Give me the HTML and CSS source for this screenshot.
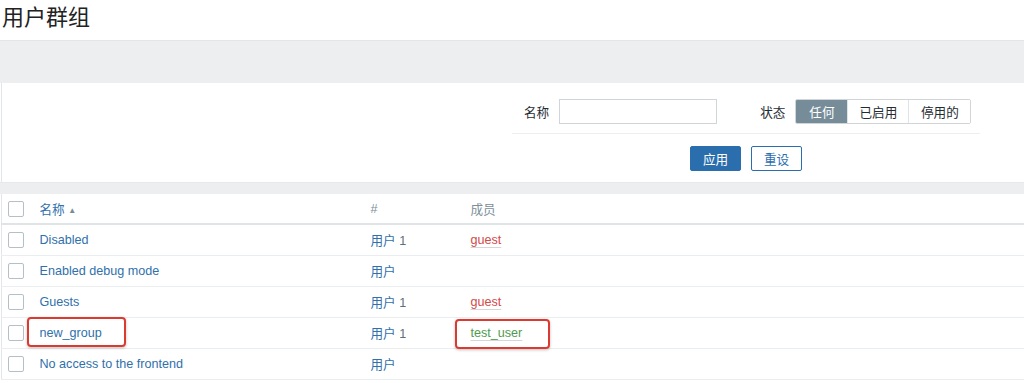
FILE: index.html
```html
<!DOCTYPE html>
<html lang="zh">
<head>
<meta charset="utf-8">
<title>用户群组</title>
<link rel="stylesheet" href="styles.css">
</head>
<body>
<header class="page-header">
  <h1 class="title">用户群组</h1>
</header>
<div class="band"></div>
<section class="filter">
  <div class="filter-inner">
    <div class="filter-row">
      <label class="flabel">名称</label>
      <input class="finput" type="text">
      <label class="flabel status-label">状态</label>
      <div class="seg">
        <span class="seg-item active">任何</span>
        <span class="seg-item w61">已启用</span>
        <span class="seg-item w63">停用的</span>
      </div>
    </div>
    <div class="filter-buttons">
      <button class="btn primary">应用</button>
      <button class="btn alt">重设</button>
    </div>
  </div>
</section>
<div class="band small"></div>
<table class="list">
  <thead>
    <tr>
      <th class="c-check"><span class="cb"></span></th>
      <th class="c-name"><span class="link">名称</span> <span class="arrow">▲</span></th>
      <th class="c-num">#</th>
      <th class="c-mem">成员</th>
    </tr>
  </thead>
  <tbody>
    <tr>
      <td class="c-check"><span class="cb"></span></td>
      <td class="c-name"><span class="link">Disabled</span></td>
      <td class="c-num"><span class="link">用户</span> <span class="cnt">1</span></td>
      <td class="c-mem"><span class="member red">guest</span></td>
    </tr>
    <tr>
      <td class="c-check"><span class="cb"></span></td>
      <td class="c-name"><span class="link">Enabled debug mode</span></td>
      <td class="c-num"><span class="link">用户</span></td>
      <td class="c-mem"></td>
    </tr>
    <tr>
      <td class="c-check"><span class="cb"></span></td>
      <td class="c-name"><span class="link">Guests</span></td>
      <td class="c-num"><span class="link">用户</span> <span class="cnt">1</span></td>
      <td class="c-mem"><span class="member red">guest</span></td>
    </tr>
    <tr>
      <td class="c-check"><span class="cb"></span></td>
      <td class="c-name"><span class="link mark mark-a">new_group</span></td>
      <td class="c-num"><span class="link">用户</span> <span class="cnt">1</span></td>
      <td class="c-mem"><span class="member green mark mark-b">test_user</span></td>
    </tr>
    <tr>
      <td class="c-check"><span class="cb"></span></td>
      <td class="c-name"><span class="link">No access to the frontend</span></td>
      <td class="c-num"><span class="link">用户</span></td>
      <td class="c-mem"></td>
    </tr>
  </tbody>
</table>
</body>
</html>
```
FILE: styles.css
```css
* { box-sizing: border-box; }
html, body { margin: 0; padding: 0; background: #ffffff; }
body {
  font-family: "Liberation Sans", Arial, "Noto Sans CJK SC", sans-serif;
  font-size: 12.6px;
  color: #1f2c33;
  overflow: hidden;
}
.page-header { height: 40px; padding: 4px 0 0 2px; }
.title {
  margin: 0;
  font-family: "Liberation Sans", "Noto Sans CJK SC", sans-serif;
  font-size: 22px;
  font-weight: normal;
  line-height: 27px;
  color: #222222;
}
.band {
  height: 43px;
  background: #eceef0;
  border-top: 1px solid #e3e5e7;
}
.band.small { height: 12px; border-top: 1px solid #e6e8ea; }
.filter {
  height: 99px;
  background: #fff;
  margin-left: 1px;
  border-left: 1px solid #e3e6e8;
  display: flex;
  justify-content: flex-end;
  padding: 16px 44px 0 0;
}
.filter-inner { width: 468px; display: flex; flex-direction: column; }
.filter-row {
  display: flex;
  align-items: center;
  height: 25px;
  padding-left: 12px;
  margin-bottom: 9px;
}
.filter-inner .filter-buttons {
  border-top: 1px solid #eceff1;
  padding-top: 12px;
  display: flex;
  justify-content: center;
  gap: 10px;
}
.flabel { color: #1f2c33; font-size: 12.6px; }
.finput {
  width: 158px;
  height: 25px;
  margin-left: 10px;
  border: 1px solid #cfd5d9;
  border-radius: 0;
  background: #fff;
  padding: 0 5px;
}
.status-label { margin-left: 43px; }
.seg {
  margin-left: 10px;
  display: flex;
  height: 25px;
  border: 1px solid #cfd5d9;
  border-radius: 2px;
  overflow: hidden;
}
.seg-item {
  width: 51px;
  display: flex;
  align-items: center;
  justify-content: center;
  color: #1f2c33;
  background: #fff;
  border-left: 1px solid #dfe4e7;
}
.seg-item:first-child { border-left: none; }
.seg-item.w61 { width: 61px; }
.seg-item.w63 { width: 62px; }
.seg-item.active { background: #768d99; color: #fff; }
.btn {
  width: 51px;
  height: 25px;
  font-family: inherit;
  font-size: 12.6px;
  border-radius: 2px;
  padding: 0;
  cursor: pointer;
}
.btn.primary { background: #2b6ead; border: 1px solid #2b6ead; color: #fff; }
.btn.alt { background: #fff; border: 1px solid #2b6ead; color: #2b6ead; }
.list {
  width: calc(100% - 1px);
  margin-left: 1px;
  border-collapse: collapse;
  border-left: 1px solid #e3e6e8;
}
.list th, .list td { padding: 0; text-align: left; font-weight: normal; }
.list thead tr { height: 30px; border-bottom: 2px solid #dfe4e7; }
.list tbody tr { height: 31px; border-bottom: 1px solid #ebeef0; }
.list th { color: #7c8f99; }
.c-check { width: 38px; padding-left: 6px !important; }
.c-name { width: 331px; }
.c-num { width: 100px; }
.cb {
  display: block;
  width: 16px;
  height: 16px;
  border: 1px solid #b4c0c6;
  border-radius: 2px;
  background: #fff;
}
.link { color: #3070ab; }
.arrow { color: #768d99; font-size: 8px; vertical-align: 1px; }
.cnt { color: #5f6e76; }
.member { text-decoration: underline; text-decoration-color: rgba(120,120,120,0.3); text-underline-offset: 3px; }
.member.red { color: #d24a4a; }
.member.green { color: #4e9b4e; }
.mark { position: relative; }
.mark::after {
  content: "";
  position: absolute;
  border: 2px solid #db3a30;
  border-radius: 4px;
  box-shadow: 0 1px 3px rgba(0,0,0,0.25);
}
.mark-a::after { left: -13px; right: -24px; top: -9px; bottom: -7px; }
.mark-b::after { left: -16px; right: -28px; top: -7px; bottom: -9px; }
```
